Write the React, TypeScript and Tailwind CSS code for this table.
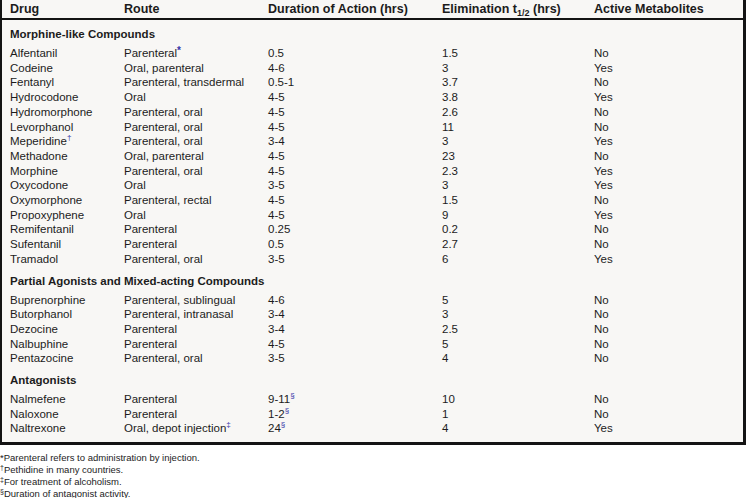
import React from "react";

type Row = { drug: React.ReactNode; route: React.ReactNode; dur: React.ReactNode; elim: string; active: string };

function Mark({ children, big }: { children: React.ReactNode; big?: boolean }) {
  return (
    <span
      className={`relative align-baseline leading-none text-[#3434a8] ${
        big ? "-top-[3px] text-[10px] font-bold" : "-top-[5px] text-[8px]"
      }`}
    >
      {children}
    </span>
  );
}

function FootMark({ children }: { children: React.ReactNode }) {
  return <span className="relative -top-[3px] text-[7px] leading-none align-baseline">{children}</span>;
}

const sections: { title: string; rows: Row[] }[] = [
  {
    title: "Morphine-like Compounds",
    rows: [
      { drug: "Alfentanil", route: <>Parenteral<Mark big>*</Mark></>, dur: "0.5", elim: "1.5", active: "No" },
      { drug: "Codeine", route: "Oral, parenteral", dur: "4-6", elim: "3", active: "Yes" },
      { drug: "Fentanyl", route: "Parenteral, transdermal", dur: "0.5-1", elim: "3.7", active: "No" },
      { drug: "Hydrocodone", route: "Oral", dur: "4-5", elim: "3.8", active: "Yes" },
      { drug: "Hydromorphone", route: "Parenteral, oral", dur: "4-5", elim: "2.6", active: "No" },
      { drug: "Levorphanol", route: "Parenteral, oral", dur: "4-5", elim: "11", active: "No" },
      { drug: <>Meperidine<Mark>†</Mark></>, route: "Parenteral, oral", dur: "3-4", elim: "3", active: "Yes" },
      { drug: "Methadone", route: "Oral, parenteral", dur: "4-5", elim: "23", active: "No" },
      { drug: "Morphine", route: "Parenteral, oral", dur: "4-5", elim: "2.3", active: "Yes" },
      { drug: "Oxycodone", route: "Oral", dur: "3-5", elim: "3", active: "Yes" },
      { drug: "Oxymorphone", route: "Parenteral, rectal", dur: "4-5", elim: "1.5", active: "No" },
      { drug: "Propoxyphene", route: "Oral", dur: "4-5", elim: "9", active: "Yes" },
      { drug: "Remifentanil", route: "Parenteral", dur: "0.25", elim: "0.2", active: "No" },
      { drug: "Sufentanil", route: "Parenteral", dur: "0.5", elim: "2.7", active: "No" },
      { drug: "Tramadol", route: "Parenteral, oral", dur: "3-5", elim: "6", active: "Yes" },
    ],
  },
  {
    title: "Partial Agonists and Mixed-acting Compounds",
    rows: [
      { drug: "Buprenorphine", route: "Parenteral, sublingual", dur: "4-6", elim: "5", active: "No" },
      { drug: "Butorphanol", route: "Parenteral, intranasal", dur: "3-4", elim: "3", active: "No" },
      { drug: "Dezocine", route: "Parenteral", dur: "3-4", elim: "2.5", active: "No" },
      { drug: "Nalbuphine", route: "Parenteral", dur: "4-5", elim: "5", active: "No" },
      { drug: "Pentazocine", route: "Parenteral, oral", dur: "3-5", elim: "4", active: "No" },
    ],
  },
  {
    title: "Antagonists",
    rows: [
      { drug: "Nalmefene", route: "Parenteral", dur: <>9-11<Mark>§</Mark></>, elim: "10", active: "No" },
      { drug: "Naloxone", route: "Parenteral", dur: <>1-2<Mark>§</Mark></>, elim: "1", active: "No" },
      { drug: "Naltrexone", route: <>Oral, depot injection<Mark>‡</Mark></>, dur: <>24<Mark>§</Mark></>, elim: "4", active: "Yes" },
    ],
  },
];

const cols = "grid grid-cols-[114px_144px_174px_152px_1fr] pl-[8px]";

export default function App() {
  return (
    <div className="w-[746px] h-[498px] bg-white text-[#1c1c1c] font-['Liberation_Sans',Arial,sans-serif] overflow-hidden">
      <div className="bg-[#f8f7f5] border-l-2 border-r-[3px] border-b-[3px] border-[#141414]">
        <div className={`${cols} h-[20px] items-center border-b-2 border-[#141414] text-[12.5px] font-bold leading-[15px]`}>
          <div>Drug</div>
          <div>Route</div>
          <div>Duration of Action (hrs)</div>
          <div>
            Elimination t<span className="relative top-[3px] text-[9px] leading-none align-baseline">1/2</span> (hrs)
          </div>
          <div>Active Metabolites</div>
        </div>
        {sections.map((s, si) => (
          <div key={s.title} className={si === sections.length - 1 ? "pb-[6px]" : ""}>
            <div className="pl-[8px] pt-[7px] pb-[4px] text-[11.5px] font-bold leading-[15px]">{s.title}</div>
            {s.rows.map((r, i) => (
              <div key={i} className={`${cols} text-[11.5px] leading-[14.7px]`}>
                <div>{r.drug}</div>
                <div>{r.route}</div>
                <div>{r.dur}</div>
                <div>{r.elim}</div>
                <div>{r.active}</div>
              </div>
            ))}
          </div>
        ))}
      </div>
      <div className="pt-[7px] text-[9.5px] leading-[12px]">
        <p>*Parenteral refers to administration by injection.</p>
        <p><FootMark>†</FootMark>Pethidine in many countries.</p>
        <p><FootMark>‡</FootMark>For treatment of alcoholism.</p>
        <p><FootMark>§</FootMark>Duration of antagonist activity.</p>
      </div>
    </div>
  );
}
